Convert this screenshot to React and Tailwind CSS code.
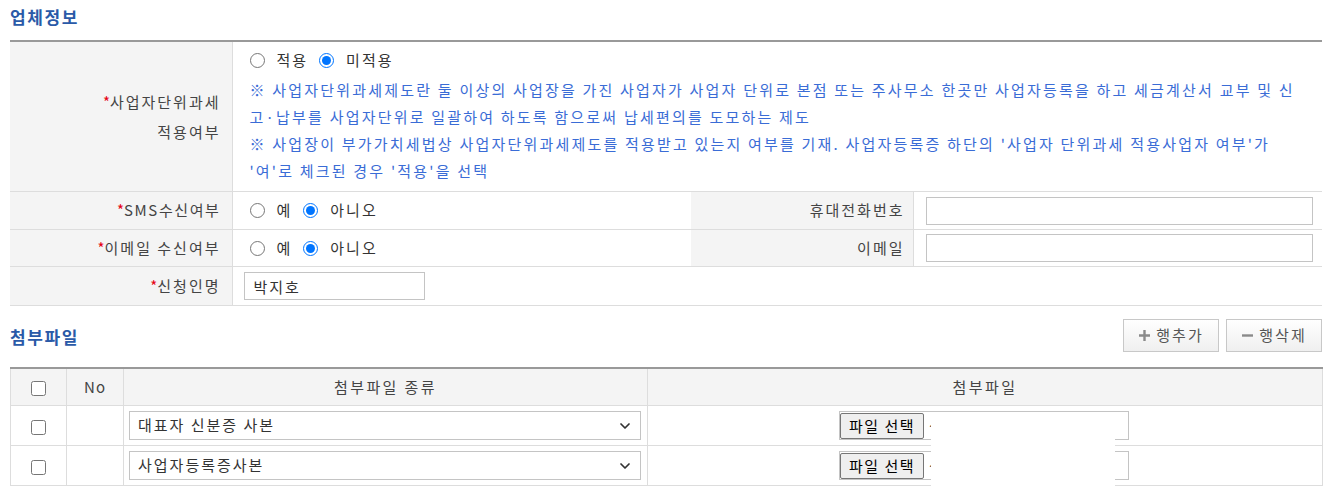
import { ChevronDown } from "lucide-react";

// 업체정보 + 첨부파일 폼 화면
const FONT = "font-['Noto_Sans_CJK_KR','Noto_Sans',sans-serif]";

function Req({ children }) {
  return (
    <>
      <span className="text-[#e60012] tracking-normal">*</span>
      {children}
    </>
  );
}

function Radio({ name, options, checked }) {
  return (
    <div className="flex items-center text-[15px] text-[#333]">
      {options.map((o) => (
        <label key={o} className="flex items-center mr-[11px]">
          <input
            type="radio"
            name={name}
            defaultChecked={o === checked}
            className="w-[15px] h-[15px] m-0 mr-[12px] accent-[#0075ff]"
          />
          {o}
        </label>
      ))}
    </div>
  );
}

function TextInput({ className = "", value = "" }) {
  return (
    <input
      type="text"
      defaultValue={value}
      className={`h-[28px] border border-[#c4c4c4] px-[9px] text-[15px] text-[#333] outline-none tracking-[2px] ${className}`}
    />
  );
}

function SquareBtn({ icon, label }) {
  return (
    <button className="flex items-center justify-center gap-[5px] w-[96px] h-[33px] border border-[#c8c8c8] bg-gradient-to-b from-white to-[#efefef] text-[15px] text-[#555] tracking-[2px]">
      {icon}
      {label}
    </button>
  );
}

const PlusIcon = (
  <svg width="13" height="13" viewBox="0 0 13 13">
    <path d="M6.5 1v11M1 6.5h11" stroke="#8a8a8a" strokeWidth="2.4" />
  </svg>
);
const MinusIcon = (
  <svg width="13" height="13" viewBox="0 0 13 13">
    <path d="M1 6.5h11" stroke="#8a8a8a" strokeWidth="2.4" />
  </svg>
);

function FileBox() {
  return (
    <div className="ml-[191px] flex items-center w-[290px] h-[29px] border border-[#c4c4c4] bg-white">
      <span className="h-[26px] mt-[1px] w-[84px] shrink-0 flex items-center justify-center border border-[#767676] rounded-[2px] bg-[#efefef] text-[15px] text-black leading-none tracking-[1.5px]">
        파일 선택
      </span>
      <span className="ml-[5px] text-[15px] text-[#333] whitespace-nowrap overflow-hidden">선택된 파일 없음</span>
    </div>
  );
}

function Select({ value }) {
  return (
    <div className="relative w-[512px] h-[29px]">
      <select
        defaultValue={value}
        className="appearance-none w-full h-full border border-[#c4c4c4] bg-white pl-[8px] text-[15px] text-[#333] outline-none tracking-[2px]"
      >
        <option>{value}</option>
      </select>
      <ChevronDown size={16} strokeWidth={2.6} className="absolute right-[8px] top-[7px] text-[#333] pointer-events-none" />
    </div>
  );
}

export default function App() {
  const th = "bg-[#f4f4f4] text-right font-normal text-[15px] text-[#444] border-b border-[#ddd]";
  const td = "border-b border-[#ddd] text-left align-middle";

  return (
    <div className={`${FONT} tracking-[2px] bg-white w-[1332px] h-[486px] overflow-hidden px-[10px]`}>
      <h2 className="pt-[3px] h-[40px] text-[17px] font-bold text-[#2a5aa8] leading-[28px] tracking-[1.6px]">업체정보</h2>

      <table className="w-[1312px] table-fixed border-collapse border-t-2 border-[#999]">
        <colgroup>
          <col className="w-[222px]" />
          <col className="w-[459px]" />
          <col className="w-[222px]" />
          <col className="w-[409px]" />
        </colgroup>
        <tbody>
          <tr className="h-[150px]">
            <th className={`${th} border-r pr-[11px] leading-[30px]`}>
              <Req>사업자단위과세</Req>
              <br />
              적용여부
            </th>
            <td colSpan={3} className={`${td} pl-[17px] pt-[3px] pb-[7px]`}>
              <div className="h-[31px] flex items-center">
                <Radio name="unit" options={["적용", "미적용"]} checked="미적용" />
              </div>
              <div className="text-[15px] leading-[27px] text-[#3a6cd6] whitespace-nowrap tracking-[2.2px]">
                ※ 사업자단위과세제도란 둘 이상의 사업장을 가진 사업자가 사업자 단위로 본점 또는 주사무소 한곳만 사업자등록을 하고 세금계산서 교부 및 신
                <br />
                고·납부를 사업자단위로 일괄하여 하도록 함으로써 납세편의를 도모하는 제도
                <br />
                ※ 사업장이 부가가치세법상 사업자단위과세제도를 적용받고 있는지 여부를 기재. 사업자등록증 하단의 '사업자 단위과세 적용사업자 여부'가
                <br />
                '여'로 체크된 경우 '적용'을 선택
              </div>
            </td>
          </tr>
          <tr className="h-[38px]">
            <th className={`${th} border-r pr-[11px] tracking-[1.6px]`}>
              <Req>SMS수신여부</Req>
            </th>
            <td className={`${td} pl-[17px]`}>
              <Radio name="sms" options={["예", "아니오"]} checked="아니오" />
            </td>
            <th className={`${th} border-r pr-[8px]`}>휴대전화번호</th>
            <td className={`${td} pl-[12px]`}>
              <TextInput className="w-[387px] block" />
            </td>
          </tr>
          <tr className="h-[37px]">
            <th className={`${th} border-r pr-[11px]`}>
              <Req>이메일 수신여부</Req>
            </th>
            <td className={`${td} pl-[17px]`}>
              <Radio name="mail" options={["예", "아니오"]} checked="아니오" />
            </td>
            <th className={`${th} border-r pr-[8px]`}>이메일</th>
            <td className={`${td} pl-[12px]`}>
              <TextInput className="w-[387px] block" />
            </td>
          </tr>
          <tr className="h-[39px]">
            <th className={`${th} border-r pr-[11px]`}>
              <Req>신청인명</Req>
            </th>
            <td colSpan={3} className={`${td} pl-[11px]`}>
              <TextInput className="w-[181px] block" value="박지호" />
            </td>
          </tr>
        </tbody>
      </table>

      <div className="flex items-center justify-between mt-[13px] h-[33px]">
        <h2 className="text-[17px] font-bold text-[#2a5aa8] pt-[2px] tracking-[1.6px]">첨부파일</h2>
        <div className="flex gap-[7px]">
          <SquareBtn icon={PlusIcon} label="행추가" />
          <SquareBtn icon={MinusIcon} label="행삭제" />
        </div>
      </div>

      <div className="relative mt-[15px]">
        <table className="w-[1312px] table-fixed border-collapse border-t-2 border-t-[#999]">
          <colgroup>
            <col className="w-[56px]" />
            <col className="w-[57px]" />
            <col className="w-[524px]" />
            <col className="w-[675px]" />
          </colgroup>
          <thead>
            <tr className="h-[37px] bg-[#f4f4f4] text-[15px] text-[#444]">
              <th className="border border-t-0 border-[#ddd] font-normal">
                <input type="checkbox" className="w-[15px] h-[15px] align-middle" />
              </th>
              <th className="border border-t-0 border-[#ddd] font-normal tracking-[1px]">No</th>
              <th className="border border-t-0 border-[#ddd] font-normal tracking-[2.4px]">첨부파일 종류</th>
              <th className="border border-t-0 border-[#ddd] font-normal tracking-[2.4px]">첨부파일</th>
            </tr>
          </thead>
          <tbody>
            {["대표자 신분증 사본", "사업자등록증사본"].map((v) => (
              <tr key={v} className="h-[40px]">
                <td className="border border-[#ddd] text-center">
                  <input type="checkbox" className="w-[15px] h-[15px] align-middle" />
                </td>
                <td className="border border-[#ddd]" />
                <td className="border border-[#ddd] px-[5px]">
                  <Select value={v} />
                </td>
                <td className="border border-[#ddd]">
                  <FileBox />
                </td>
              </tr>
            ))}
          </tbody>
        </table>
        <div className="absolute left-[921px] top-[48px] w-[184px] h-[80px] bg-white" />
      </div>
    </div>
  );
}
